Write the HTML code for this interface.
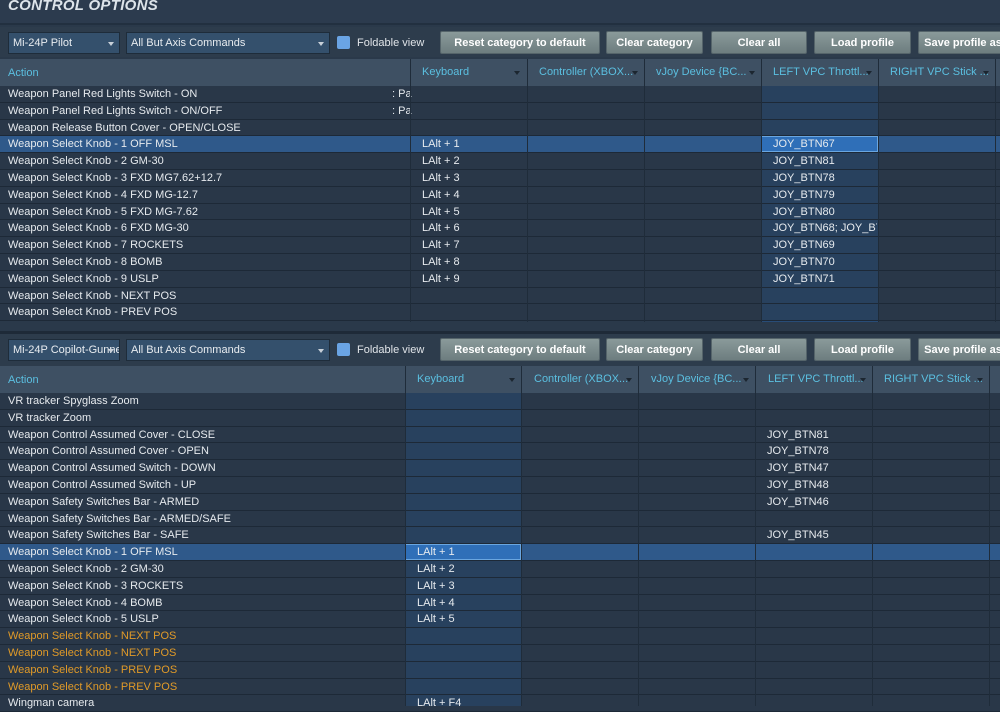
<!DOCTYPE html>
<html><head><meta charset="utf-8"><style>
*{margin:0;padding:0;box-sizing:border-box}
body{width:1000px;height:706px;overflow:hidden;background:#2a394a;font-family:"Liberation Sans","DejaVu Sans",sans-serif;font-size:11px;color:#e6eaee;position:relative}
.abs{position:absolute}
.title{left:0;top:0;width:1000px;height:25px;background:#2c3b4e;border-bottom:2px solid #223040}
.title span{position:absolute;left:8px;top:-3px;font-size:15px;font-weight:bold;font-style:italic;color:#dde4ea;letter-spacing:.3px}
.tb{left:0;width:1000px;height:30px;background:#2d3c4c}
.dd{position:absolute;height:22px;background:#34506c;border:1px solid #1e2c3a;color:#e8ecf0;padding:4px 0 0 4px;white-space:nowrap;overflow:hidden}
.dd:after{content:"";position:absolute;right:5px;top:9px;border:3.5px solid transparent;border-top:4px solid #c8d0d8}
.cb{position:absolute;width:13px;height:13px;background:#6aa4e4;border-radius:2px}
.fv{position:absolute;color:#e0e4e8}
.btn{position:absolute;height:23px;background:linear-gradient(#8a9a9a,#6d7d7f);border:1px solid #55646a;border-radius:2px;color:#fff;font-weight:bold;text-align:center;padding-top:5px;white-space:nowrap;overflow:hidden}
.hdr{left:0;width:1000px;height:27px;background:rgba(70,88,108,.75)}
.hdr span{position:absolute;top:7px;color:#5bbfe0;white-space:nowrap}
.hdr i{position:absolute;top:12px;border:3.5px solid transparent;border-top:4px solid #1c2630}
.vl{position:absolute;width:1px;background:#1f2c3a}
.row{position:absolute;left:0;width:1000px;height:16.8px;border-bottom:1px solid #1d2937;background:rgba(40,54,70,.5)}
.row span{position:absolute;top:2px;white-space:nowrap}
.sel{background:rgba(50,100,160,.75)}
.hc{position:absolute;background:rgba(40,90,150,.6)}
.hcell{position:absolute;background:#2f6fb8;border:1px solid #6aa6e0}
.or{color:#e09a28}
</style></head><body>
<div class="abs title"><span>CONTROL OPTIONS</span></div>

<div class="abs tb" style="top:27px"></div>
<div class="dd" style="left:8px;top:32px;width:112px">Mi-24P Pilot</div>
<div class="dd" style="left:126px;top:32px;width:204px">All But Axis Commands</div>
<div class="cb" style="left:337px;top:36px"></div>
<div class="fv" style="left:357px;top:37px">Foldable view</div>
<div class="btn" style="left:440px;top:31px;width:160px">Reset category to default</div>
<div class="btn" style="left:606px;top:31px;width:97px">Clear category</div>
<div class="btn" style="left:711px;top:31px;width:96px">Clear all</div>
<div class="btn" style="left:814px;top:31px;width:97px">Load profile</div>
<div class="btn" style="left:918px;top:31px;width:90px">Save profile as</div>

<div class="abs hdr" style="top:59px">
<span style="left:8px;top:8px">Action</span>
<span style="left:422px">Keyboard</span><i style="left:514px"></i>
<span style="left:539px">Controller (XBOX...</span><i style="left:632px"></i>
<span style="left:656px">vJoy Device {BC...</span><i style="left:749px"></i>
<span style="left:773px">LEFT VPC Throttl...</span><i style="left:866px"></i>
<span style="left:890px">RIGHT VPC Stick ...</span><i style="left:983px"></i>
</div>
<div class="hc" style="left:761px;top:86px;width:117px;height:236px"></div>

<div class="row" style="top:86px"><span style="left:8px">Weapon Panel Red Lights Switch - ON</span><span style="left:392px">: Pa</span></div>
<div class="row" style="top:102.8px"><span style="left:8px">Weapon Panel Red Lights Switch - ON/OFF</span><span style="left:392px">: Pa</span></div>
<div class="row" style="top:119.6px"><span style="left:8px">Weapon Release Button Cover - OPEN/CLOSE</span></div>
<div class="row sel" style="top:136.4px"><div class="hcell" style="left:761px;top:0;width:117px;height:16px"></div><span style="left:8px">Weapon Select Knob - 1 OFF MSL</span><span style="left:422px">LAlt + 1</span><span style="left:773px">JOY_BTN67</span></div>
<div class="row" style="top:153.2px"><span style="left:8px">Weapon Select Knob - 2 GM-30</span><span style="left:422px">LAlt + 2</span><span style="left:773px">JOY_BTN81</span></div>
<div class="row" style="top:170px"><span style="left:8px">Weapon Select Knob - 3 FXD MG7.62+12.7</span><span style="left:422px">LAlt + 3</span><span style="left:773px">JOY_BTN78</span></div>
<div class="row" style="top:186.8px"><span style="left:8px">Weapon Select Knob - 4 FXD MG-12.7</span><span style="left:422px">LAlt + 4</span><span style="left:773px">JOY_BTN79</span></div>
<div class="row" style="top:203.6px"><span style="left:8px">Weapon Select Knob - 5 FXD MG-7.62</span><span style="left:422px">LAlt + 5</span><span style="left:773px">JOY_BTN80</span></div>
<div class="row" style="top:220.4px"><span style="left:8px">Weapon Select Knob - 6 FXD MG-30</span><span style="left:422px">LAlt + 6</span><span style="left:773px;width:104px;overflow:hidden">JOY_BTN68; JOY_BTN82</span></div>
<div class="row" style="top:237.2px"><span style="left:8px">Weapon Select Knob - 7 ROCKETS</span><span style="left:422px">LAlt + 7</span><span style="left:773px">JOY_BTN69</span></div>
<div class="row" style="top:254px"><span style="left:8px">Weapon Select Knob - 8 BOMB</span><span style="left:422px">LAlt + 8</span><span style="left:773px">JOY_BTN70</span></div>
<div class="row" style="top:270.8px"><span style="left:8px">Weapon Select Knob - 9 USLP</span><span style="left:422px">LAlt + 9</span><span style="left:773px">JOY_BTN71</span></div>
<div class="row" style="top:287.6px"><span style="left:8px">Weapon Select Knob - NEXT POS</span></div>
<div class="row" style="top:304.4px"><span style="left:8px">Weapon Select Knob - PREV POS</span></div>
<div class="vl" style="left:410px;top:59px;height:263px"></div>
<div class="vl" style="left:527px;top:59px;height:263px"></div>
<div class="vl" style="left:644px;top:59px;height:263px"></div>
<div class="vl" style="left:761px;top:59px;height:263px"></div>
<div class="vl" style="left:878px;top:59px;height:263px"></div>
<div class="vl" style="left:995px;top:59px;height:263px"></div>

<div class="abs" style="left:0;top:331px;width:1000px;height:3px;background:#1e2a38"></div>
<div class="abs tb" style="top:334px;height:32px"></div>
<div class="dd" style="left:8px;top:339px;width:112px">Mi-24P Copilot-Gunner</div>
<div class="dd" style="left:126px;top:339px;width:204px">All But Axis Commands</div>
<div class="cb" style="left:337px;top:343px"></div>
<div class="fv" style="left:357px;top:344px">Foldable view</div>
<div class="btn" style="left:440px;top:338px;width:160px">Reset category to default</div>
<div class="btn" style="left:606px;top:338px;width:97px">Clear category</div>
<div class="btn" style="left:711px;top:338px;width:96px">Clear all</div>
<div class="btn" style="left:814px;top:338px;width:97px">Load profile</div>
<div class="btn" style="left:918px;top:338px;width:90px">Save profile as</div>

<div class="abs hdr" style="top:366px">
<span style="left:8px;top:8px">Action</span>
<span style="left:417px">Keyboard</span><i style="left:509px"></i>
<span style="left:534px">Controller (XBOX...</span><i style="left:626px"></i>
<span style="left:651px">vJoy Device {BC...</span><i style="left:743px"></i>
<span style="left:768px">LEFT VPC Throttl...</span><i style="left:860px"></i>
<span style="left:884px">RIGHT VPC Stick ...</span><i style="left:977px"></i>
</div>
<div class="hc" style="left:405px;top:393px;width:116px;height:313px"></div>

<div class="row" style="top:393px"><span style="left:8px">VR tracker Spyglass Zoom</span></div>
<div class="row" style="top:409.8px"><span style="left:8px">VR tracker Zoom</span></div>
<div class="row" style="top:426.6px"><span style="left:8px">Weapon Control Assumed Cover - CLOSE</span><span style="left:767px">JOY_BTN81</span></div>
<div class="row" style="top:443.4px"><span style="left:8px">Weapon Control Assumed Cover - OPEN</span><span style="left:767px">JOY_BTN78</span></div>
<div class="row" style="top:460.2px"><span style="left:8px">Weapon Control Assumed Switch - DOWN</span><span style="left:767px">JOY_BTN47</span></div>
<div class="row" style="top:477px"><span style="left:8px">Weapon Control Assumed Switch - UP</span><span style="left:767px">JOY_BTN48</span></div>
<div class="row" style="top:493.8px"><span style="left:8px">Weapon Safety Switches Bar - ARMED</span><span style="left:767px">JOY_BTN46</span></div>
<div class="row" style="top:510.6px"><span style="left:8px">Weapon Safety Switches Bar - ARMED/SAFE</span></div>
<div class="row" style="top:527.4px"><span style="left:8px">Weapon Safety Switches Bar - SAFE</span><span style="left:767px">JOY_BTN45</span></div>
<div class="row sel" style="top:544.2px"><div class="hcell" style="left:405px;top:0;width:116px;height:16px"></div><span style="left:8px">Weapon Select Knob - 1 OFF MSL</span><span style="left:417px">LAlt + 1</span></div>
<div class="row" style="top:561px"><span style="left:8px">Weapon Select Knob - 2 GM-30</span><span style="left:417px">LAlt + 2</span></div>
<div class="row" style="top:577.8px"><span style="left:8px">Weapon Select Knob - 3 ROCKETS</span><span style="left:417px">LAlt + 3</span></div>
<div class="row" style="top:594.6px"><span style="left:8px">Weapon Select Knob - 4 BOMB</span><span style="left:417px">LAlt + 4</span></div>
<div class="row" style="top:611.4px"><span style="left:8px">Weapon Select Knob - 5 USLP</span><span style="left:417px">LAlt + 5</span></div>
<div class="row" style="top:628.2px"><span class="or" style="left:8px">Weapon Select Knob - NEXT POS</span></div>
<div class="row" style="top:645px"><span class="or" style="left:8px">Weapon Select Knob - NEXT POS</span></div>
<div class="row" style="top:661.8px"><span class="or" style="left:8px">Weapon Select Knob - PREV POS</span></div>
<div class="row" style="top:678.6px"><span class="or" style="left:8px">Weapon Select Knob - PREV POS</span></div>
<div class="row" style="top:695.4px"><span style="left:8px">Wingman camera</span><span style="left:417px">LAlt + F4</span></div>
<div class="vl" style="left:405px;top:366px;height:340px"></div>
<div class="vl" style="left:521px;top:366px;height:340px"></div>
<div class="vl" style="left:638px;top:366px;height:340px"></div>
<div class="vl" style="left:755px;top:366px;height:340px"></div>
<div class="vl" style="left:872px;top:366px;height:340px"></div>
<div class="vl" style="left:989px;top:366px;height:340px"></div>
</body></html>
